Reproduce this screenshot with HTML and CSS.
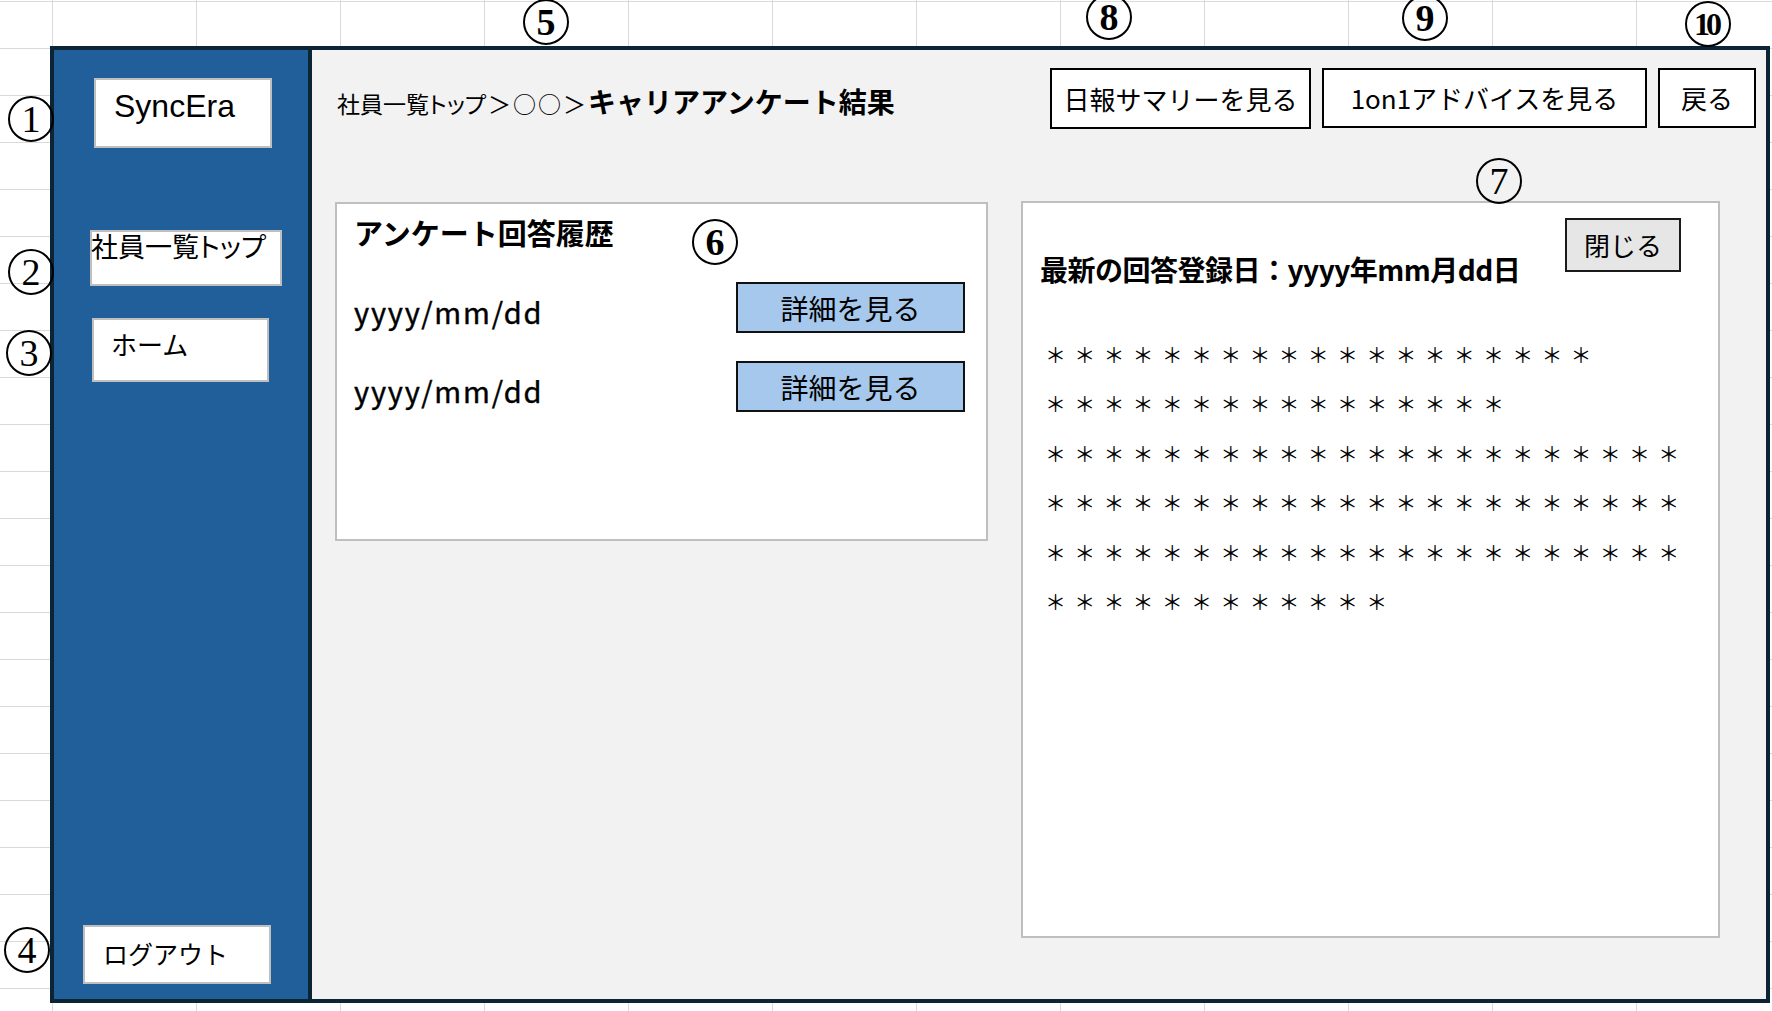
FILE: index.html
```html
<!DOCTYPE html>
<html lang="ja">
<head>
<meta charset="utf-8">
<title>キャリアアンケート結果</title>
<link rel="stylesheet" href="styles.css">
</head>
<body>
<div class="sheet">
  <div class="frame">
    <aside class="sidebar">
      <div class="side-box logo">SyncEra</div>
      <div class="side-box nav-top">社員一覧<span class="kana">トップ</span></div>
      <div class="side-box nav-home">ホーム</div>
      <div class="side-box logout">ログアウト</div>
    </aside>
    <main class="main">
      <header class="header">
        <div class="crumbs"><span class="crumb">社員一覧<span class="kana">トップ</span><span class="sep">＞○○＞</span></span><span class="page-title">キャリアアンケート結果</span></div>
        <div class="actions">
          <button class="btn btn-summary">日報サマリーを見る</button>
          <button class="btn btn-advice">1on1アドバイスを見る</button>
          <button class="btn btn-back">戻る</button>
        </div>
      </header>
      <div class="content">
        <section class="card history">
          <h2 class="card-title">アンケート回答履歴</h2>
          <div class="history-row"><span class="date">yyyy/mm/dd</span><button class="detail-btn">詳細を見る</button></div>
          <div class="history-row row-second"><span class="date">yyyy/mm/dd</span><button class="detail-btn">詳細を見る</button></div>
        </section>
        <section class="card result">
          <div class="result-head">
            <h2 class="result-title">最新の回答登録日：yyyy年mm月dd日</h2>
            <button class="close-btn">閉じる</button>
          </div>
          <div class="answer">
            <div class="answer-line">＊＊＊＊＊＊＊＊＊＊＊＊＊＊＊＊＊＊＊</div>
            <div class="answer-line">＊＊＊＊＊＊＊＊＊＊＊＊＊＊＊＊</div>
            <div class="answer-line">＊＊＊＊＊＊＊＊＊＊＊＊＊＊＊＊＊＊＊＊＊＊</div>
            <div class="answer-line">＊＊＊＊＊＊＊＊＊＊＊＊＊＊＊＊＊＊＊＊＊＊</div>
            <div class="answer-line">＊＊＊＊＊＊＊＊＊＊＊＊＊＊＊＊＊＊＊＊＊＊</div>
            <div class="answer-line">＊＊＊＊＊＊＊＊＊＊＊＊</div>
          </div>
        </section>
      </div>
    </main>
  </div>

  <div class="mark m1">1</div>
  <div class="mark m2">2</div>
  <div class="mark m3">3</div>
  <div class="mark m4">4</div>
  <div class="mark m5">5</div>
  <div class="mark m6">6</div>
  <div class="mark m7">7</div>
  <div class="mark m8">8</div>
  <div class="mark m9">9</div>
  <div class="mark m10">10</div>
</div>
</body>
</html>
```

FILE: styles.css
```css
html, body {
  margin: 0;
  padding: 0;
  background: #fff;
}

.sheet {
  position: relative;
  width: 1772px;
  height: 1011px;
  overflow: hidden;
  box-sizing: border-box;
  padding: 46px 0 0 50px;
  background-color: #fff;
  background-image:
    linear-gradient(to right, #dadada 1px, transparent 1px),
    linear-gradient(to bottom, #dadada 1px, transparent 1px);
  background-size: 144px 100%, 100% 47px;
  background-position: 52px 0, 0 1px;
  font-family: "Noto Sans CJK JP", sans-serif;
  color: #000;
}

.kana {
  font-feature-settings: "palt";
}

/* frame */
.frame {
  width: 1720px;
  height: 957px;
  box-sizing: border-box;
  border: 4px solid #0b2535;
  display: flex;
}

/* sidebar */
.sidebar {
  width: 258px;
  flex: none;
  box-sizing: border-box;
  border-right: 4px solid #0b2535;
  background: #215f9a;
  display: flex;
  flex-direction: column;
  align-items: flex-start;
  padding: 28px 0 15px;
}

.side-box {
  box-sizing: border-box;
  background: #fff;
  border: 2px solid #bfbfbf;
  white-space: nowrap;
}

.logo {
  margin-left: 40px;
  width: 178px;
  height: 70px;
  font-family: "Liberation Sans", Arial, sans-serif;
  font-size: 32px;
  line-height: 37px;
  padding: 8px 0 0 18px;
}

.nav-top {
  margin: 82px 0 0 36px;
  width: 192px;
  height: 56px;
  font-size: 27px;
  line-height: 27px;
  padding: 0;
  text-indent: -1px;
}

.nav-home {
  margin: 32px 0 0 38px;
  width: 177px;
  height: 64px;
  font-size: 26px;
  line-height: 26px;
  padding: 11px 0 0 17px;
}

.logout {
  margin: auto 0 0 29px;
  width: 188px;
  height: 59px;
  font-size: 25px;
  line-height: 25px;
  padding: 14px 0 0 18px;
}

/* main */
.main {
  flex: 1;
  background: #f2f2f2;
  display: flex;
  flex-direction: column;
}

.header {
  display: flex;
  align-items: flex-start;
  padding: 18px 10px 0 25px;
}

.crumbs {
  margin-top: 13px;
  line-height: 40px;
  white-space: nowrap;
}

.crumb {
  font-size: 23px;
}

.crumb .sep {
  letter-spacing: 2px;
  padding-left: 2px;
}

.page-title {
  font-size: 28px;
  font-weight: 700;
}

.actions {
  margin-left: auto;
  display: flex;
  align-items: flex-start;
  gap: 11px;
}

.btn,
.detail-btn,
.close-btn {
  box-sizing: border-box;
  font-family: inherit;
  color: #000;
  padding: 0;
  margin: 0;
  display: flex;
  align-items: center;
  justify-content: center;
  line-height: 1;
  white-space: nowrap;
  cursor: pointer;
}

.btn {
  background: #fff;
  border: 2px solid #000;
  font-size: 26px;
  height: 60px;
}

.btn-summary {
  width: 261px;
  height: 61px;
}

.btn-advice {
  width: 325px;
}

.btn-back {
  width: 98px;
}

/* content */
.content {
  display: flex;
  align-items: flex-start;
  gap: 33px;
  padding-left: 23px;
  margin-top: 72px;
}

.card {
  box-sizing: border-box;
  background: #fff;
  border: 2px solid #bfbfbf;
}

.history {
  width: 653px;
  height: 339px;
  margin-top: 1px;
  padding: 8px 21px 0 17px;
}

.card-title {
  margin: 0;
  font-size: 29px;
  font-weight: 700;
  line-height: 40px;
}

.history-row {
  display: flex;
  justify-content: space-between;
  align-items: center;
  height: 51px;
  margin-top: 30px;
}

.history-row.row-second {
  margin-top: 28px;
}

.date {
  font-size: 29px;
  font-weight: 400;
  letter-spacing: 1.8px;
  line-height: 29px;
  padding-top: 8px;
  -webkit-text-stroke: 0.4px #000;
}

.detail-btn {
  width: 229px;
  height: 51px;
  background: #a5c8ec;
  border: 2px solid #111;
  font-size: 28px;
}

.result {
  width: 699px;
  height: 737px;
  padding: 15px 37px 0 17px;
}

.result-head {
  display: flex;
  justify-content: space-between;
  align-items: flex-start;
}

.result-title {
  margin: 31px 0 0;
  font-size: 28px;
  font-weight: 700;
  line-height: 40px;
  letter-spacing: -0.5px;
  white-space: nowrap;
}

.close-btn {
  width: 116px;
  height: 54px;
  background: #e7e6e6;
  border: 2px solid #1a1a1a;
  font-size: 26px;
}

.answer {
  margin-top: 41px;
  padding-left: 5px;
  font-size: 21px;
  line-height: 49.4px;
  letter-spacing: 8.2px;
}

.answer-line {
  white-space: nowrap;
}

/* annotation marks */
.mark {
  position: absolute;
  width: 46px;
  height: 46px;
  box-sizing: border-box;
  border: 2px solid #000;
  border-radius: 50%;
  display: flex;
  align-items: center;
  justify-content: center;
  font-family: "Liberation Serif", "Times New Roman", serif;
  font-size: 38px;
  line-height: 1;
  color: #000;
}

.m1 { left: 8px; top: 96px; }
.m2 { left: 8px; top: 249px; }
.m3 { left: 6px; top: 330px; }
.m4 { left: 4px; top: 927px; }
.m5 { left: 523px; top: -1px; font-weight: 700; }
.m6 { left: 692px; top: 219px; font-weight: 700; }
.m7 { left: 1476px; top: 158px; }
.m8 { left: 1086px; top: -6px; font-weight: 700; }
.m9 { left: 1402px; top: -5px; font-weight: 700; }
.m10 { left: 1685px; top: 1px; font-size: 32px; font-weight: 700; letter-spacing: -4px; padding-right: 4px; }
```
